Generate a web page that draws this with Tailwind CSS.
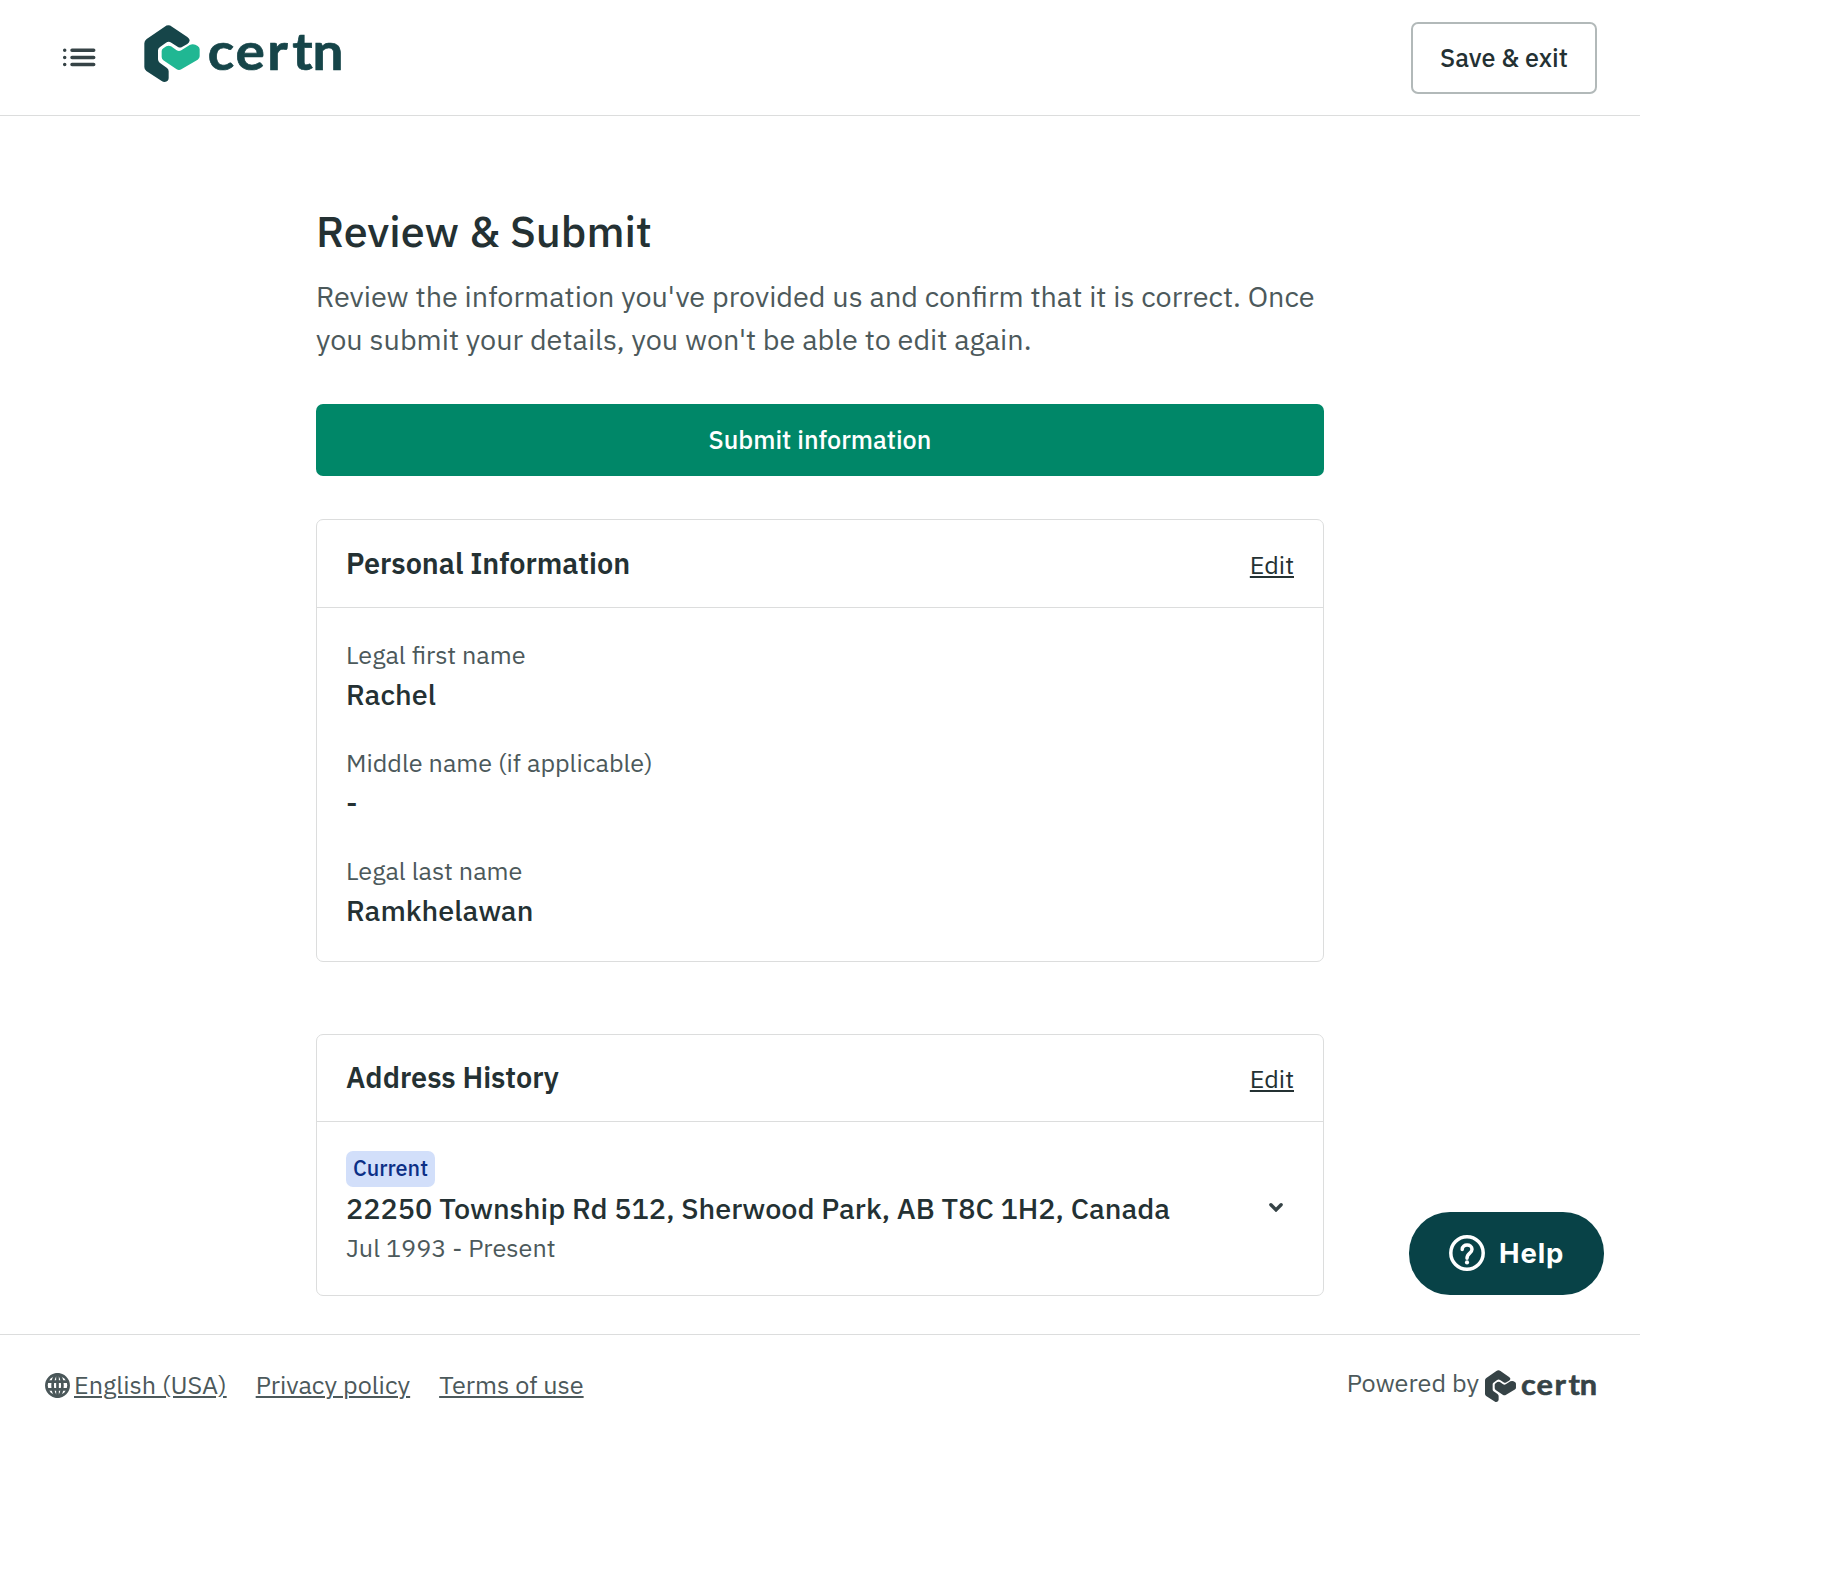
<!DOCTYPE html>
<html lang="en">
<head>
<meta charset="utf-8">
<title>Review &amp; Submit</title>
<script src="https://cdn.jsdelivr.net/npm/@tailwindcss/browser@4"></script>
</head>
<body class="bg-white font-['IBM_Plex_Sans',Roboto,sans-serif] text-[#243133]">
<div class="relative w-[1640px]">

  <header class="flex h-[116px] items-start border-b border-[#dcdddd] pl-[62px] pr-[43px]">
    <svg class="mt-[47px] h-[21px] w-[34px]" viewBox="0 0 34 21" fill="none" stroke="#364346" stroke-width="3.5" stroke-linecap="round">
      <path d="M10 3.3H31.7M10 10.5H31.7M10 17.6H31.7M2.7 3.3h.01M2.7 10.5h.01M2.7 17.6h.01"/>
    </svg>
    <svg class="ml-[48px] mt-[14px] h-[80px] w-[210px]" viewBox="-1 -30 630 240">
      <path fill="#164549" d="M0 58Q0 50 7 45L61 8Q72 0 83 8L129 39Q136 44 136 49Q136 55 129 60L113 69Q107 72 101 69L81 56Q73 51 65 56L47 69Q41 73 41 79V106Q41 112 46 116L67 131Q73 135 73 142V162Q73 172 61 174Q56 174 52 171L6 141Q0 137 0 129Z"/>
      <path fill="#20b793" d="M52 81Q52 76 57 73L66 67Q73 63 80 67L97 79Q104 83 111 79L136 63Q144 59 153 62L160 66Q166 70 166 76V97Q166 103 160 107L111 136Q104 140 97 136L57 109Q52 105 52 99Z"/>
      <text transform="scale(1.07 1)" x="178 255.5 345 415 471.5" y="137" fill="#164549" stroke="#164549" stroke-width="2" font-family="Lato, sans-serif" font-weight="700" font-size="154">certn</text>
    </svg>
    <button class="ml-auto mt-[22px] h-[72px] w-[186px] rounded-[7px] border-2 border-[#b2b9b9] text-[25.2px] font-medium leading-[36px]">Save &amp; exit</button>
  </header>

  <main class="mx-auto w-[1008px] pt-[87px]">
    <h1 class="text-[43.2px] font-medium leading-[56px]">Review &amp; Submit</h1>
    <p class="mt-4 whitespace-nowrap text-[28.8px] leading-[43px] text-[#4c595b]">Review the information you've provided us and confirm that it is correct. Once<br>you submit your details, you won't be able to edit again.</p>
    <button class="mt-[43px] block h-[72px] w-full rounded-[7px] bg-[#008768] text-[25.2px] font-medium text-white">Submit information</button>

    <section class="mt-[43px] rounded-[7px] border border-[#dcdddd]">
      <div class="flex h-[88px] items-baseline justify-between border-b border-[#dcdddd] px-[29px] pt-[25px]">
        <h2 class="text-[28.8px] font-semibold leading-[36px]">Personal Information</h2>
        <a class="text-[25.2px] leading-[36px] underline decoration-2 underline-offset-2">Edit</a>
      </div>
      <dl class="flex flex-col gap-[30px] px-[29px] pb-[30px] pt-[29px]">
        <div>
          <dt class="mb-px text-[25.2px] leading-[36px] text-[#4c595b]">Legal first name</dt>
          <dd class="text-[28.8px] font-medium leading-[41px]">Rachel</dd>
        </div>
        <div>
          <dt class="mb-px text-[25.2px] leading-[36px] text-[#4c595b]">Middle name (if applicable)</dt>
          <dd class="text-[28.8px] font-medium leading-[41px]">-</dd>
        </div>
        <div>
          <dt class="mb-px text-[25.2px] leading-[36px] text-[#4c595b]">Legal last name</dt>
          <dd class="text-[28.8px] font-medium leading-[41px]">Ramkhelawan</dd>
        </div>
      </dl>
    </section>

    <section class="mt-[72px] rounded-[7px] border border-[#dcdddd]">
      <div class="flex h-[87px] items-baseline justify-between border-b border-[#dcdddd] px-[29px] pt-6">
        <h2 class="text-[28.8px] font-semibold leading-[36px]">Address History</h2>
        <a class="text-[25.2px] leading-[36px] underline decoration-2 underline-offset-2">Edit</a>
      </div>
      <div class="flex items-center justify-between pb-[28px] pl-[29px] pr-[40px] pt-[29px]">
        <div>
          <span class="flex h-[36px] w-[89px] items-center justify-center rounded-[7px] bg-[#d2dffa] pb-[2px] text-[21.6px] font-medium text-[#0c2f86]">Current</span>
          <p class="mt-px text-[28.8px] font-medium leading-[41px]">22250 Township Rd 512, Sherwood Park, AB T8C 1H2, Canada</p>
          <p class="text-[25.2px] leading-[38px] text-[#4c595b]">Jul 1993 - Present</p>
        </div>
        <svg class="-mt-1 h-[9px] w-[14px]" viewBox="0 0 14 9" fill="none" stroke="#364346" stroke-width="3.4" stroke-linecap="round"><path d="M1.9 1.8L7 6.9L12.1 1.8"/></svg>
      </div>
    </section>
  </main>

  <footer class="mt-[38px] flex items-start border-t border-[#dcdddd] pl-[45px] pr-[38px] pt-[31px] text-[25.2px] leading-[38px] text-[#4c595b]">
    <svg class="mt-[7px] h-[25px] w-[25px]" viewBox="0 0 25 25" fill="none" stroke="#4a5759" stroke-width="2.7"><circle cx="12.5" cy="12.5" r="11.1"/><ellipse cx="12.5" cy="12.5" rx="4.9" ry="11.1"/><path d="M2 8.7H23M2 16.3H23M12.5 1.5V23.5"/></svg>
    <a class="ml-[4px] underline decoration-2 underline-offset-2">English (USA)</a>
    <a class="ml-[29px] underline decoration-2 underline-offset-2">Privacy policy</a>
    <a class="ml-[29px] underline decoration-2 underline-offset-2">Terms of use</a>
    <span class="-mt-[2px] ml-auto mr-[6px]">Powered by</span>
    <svg class="-mt-[2px] h-[45px] w-[117px]" viewBox="0 -30 627 241" fill="#364346">
      <path d="M0 58Q0 50 7 45L61 8Q72 0 83 8L129 39Q136 44 136 49Q136 55 129 60L113 69Q107 72 101 69L81 56Q73 51 65 56L47 69Q41 73 41 79V106Q41 112 46 116L67 131Q73 135 73 142V162Q73 172 61 174Q56 174 52 171L6 141Q0 137 0 129Z"/>
      <path d="M52 81Q52 76 57 73L66 67Q73 63 80 67L97 79Q104 83 111 79L136 63Q144 59 153 62L160 66Q166 70 166 76V97Q166 103 160 107L111 136Q104 140 97 136L57 109Q52 105 52 99Z"/>
      <text transform="scale(1.07 1)" x="180 258 348 418 474.5" y="137" stroke="#364346" stroke-width="3" font-family="Lato, sans-serif" font-weight="700" font-size="154">certn</text>
    </svg>
  </footer>

  <button class="absolute left-[1409px] top-[1212px] flex h-[83px] w-[195px] items-center rounded-[41px] bg-[#084247] pb-[2px] pl-[40px] font-[Inter,sans-serif] text-[27.5px] font-bold leading-[36px] tracking-[0.9px] text-white">
    <svg class="h-[36px] w-[36px]" viewBox="0 0 36 36" fill="none" stroke="#fff" stroke-width="3.5"><circle cx="18" cy="18" r="16.2"/><path d="M13.2 14.4C13.2 8.6 23 8.8 23 14.3C23 18.4 18 17.8 18 23.2" stroke-linecap="round"/><circle cx="18" cy="27.4" r="2.1" fill="#fff" stroke="none"/></svg>
    <span class="ml-[14px]">Help</span>
  </button>
</div>
</body>
</html>
